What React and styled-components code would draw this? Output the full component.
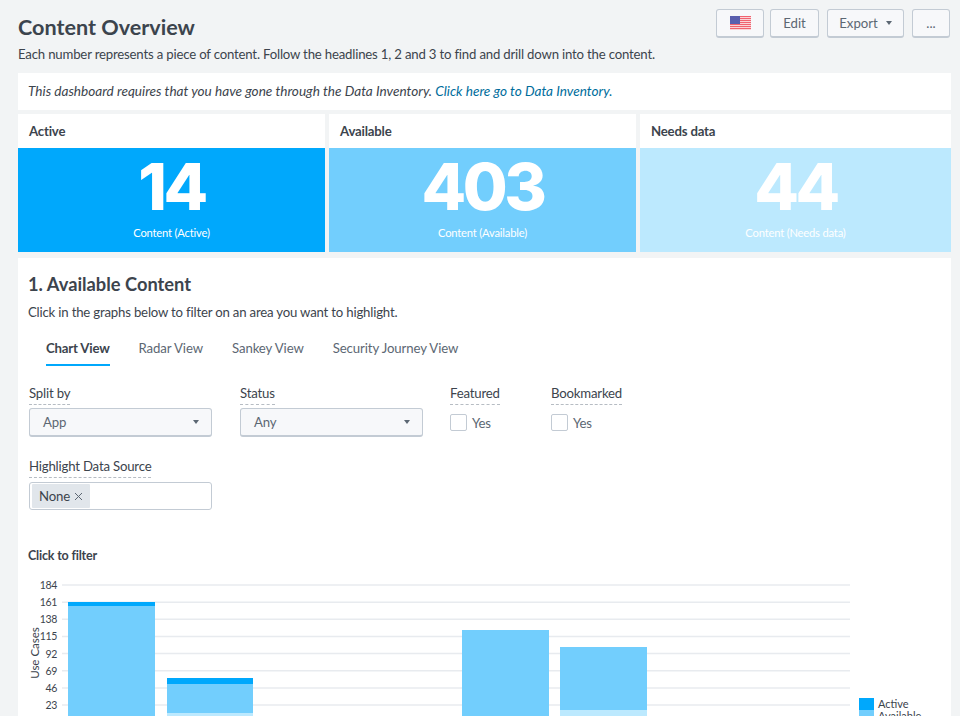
import React from 'react';
import styled, { createGlobalStyle } from 'styled-components';

const GlobalStyle = createGlobalStyle`
  html, body {
    margin: 0;
    height: 716px;
    overflow: hidden;
    background: #f2f4f5;
    font-family: Lato, "Open Sans", sans-serif;
    font-size: 13.2px;
    letter-spacing: -0.19px;
    color: #3c444d;
  }
`;

const ACTIVE = '#00a8fc';
const AVAILABLE = '#72cefd';
const NEEDS = '#bce9fe';

const Page = styled.div`
  width: 960px;
  height: 716px;
  overflow: hidden;
  box-sizing: border-box;
  padding: 9px 9px 0 18px;
`;

const TitleRow = styled.div`
  display: flex;
  justify-content: space-between;
  align-items: flex-start;
  height: 29px;
`;

const Title = styled.h1`
  margin: 4px 0 0;
  font-size: 21.6px;
  line-height: 28px;
  font-weight: 700;
  letter-spacing: 0;
`;

const Toolbar = styled.div`
  display: flex;
  margin-right: 1px;
`;

const ToolButton = styled.button`
  display: flex;
  align-items: center;
  justify-content: center;
  gap: 8px;
  box-sizing: border-box;
  width: ${({ $w }) => $w}px;
  height: 29px;
  margin-left: ${({ $ml }) => $ml || 0}px;
  padding: 0;
  border: 1px solid #c3cbd4;
  border-bottom-width: 2px;
  border-radius: 3px;
  background: #f7f8fa;
  color: #5c6773;
  font: 13.2px Lato, sans-serif;
`;

const Caret = styled.span`
  width: 0;
  height: 0;
  border-left: 3.5px solid transparent;
  border-right: 3.5px solid transparent;
  border-top: 4px solid #5c6773;
`;

const Intro = styled.p`
  margin: 8px 0 10px;
  line-height: 17px;
`;

const Notice = styled.div`
  box-sizing: border-box;
  height: 37px;
  padding: 9px 10px;
  background: #fff;
  font-size: 13.6px;
  line-height: 18px;
  letter-spacing: 0;
  font-style: italic;

  a {
    color: #006d9c;
    text-decoration: none;
  }
`;

const Cards = styled.div`
  display: grid;
  grid-template-columns: 307px 307px 311px;
  gap: 4px;
  margin-top: 4px;
`;

const Card = styled.div`
  background: #fff;
`;

const CardTitle = styled.div`
  height: 34px;
  padding-left: 11px;
  line-height: 34px;
  font-weight: 700;
`;

const CardBody = styled.div`
  height: 104px;
  box-sizing: border-box;
  padding-top: 7px;
  background: ${({ $bg }) => $bg};
  color: #fff;
  text-align: center;
`;

const BigNumber = styled.div`
  font-family: Inter, sans-serif;
  font-size: 65px;
  line-height: 64px;
  font-weight: 800;
  letter-spacing: -3.5px;
`;

const CardLabel = styled.div`
  margin-top: 7px;
  font-size: 11.2px;
  line-height: 14px;
`;

const Panel = styled.div`
  margin-top: 6px;
  height: 470px;
  padding: 0 10px;
  background: #fff;
`;

const Heading = styled.h2`
  margin: 0;
  padding-top: 14px;
  font-size: 18.3px;
  line-height: 24px;
  font-weight: 700;
  letter-spacing: 0;
`;

const Hint = styled.p`
  margin: 7px 0 0;
  line-height: 18px;
`;

const Tabs = styled.div`
  display: flex;
  gap: 29px;
  margin: 9px 0 0 18px;
`;

const Tab = styled.div`
  height: 36px;
  padding-top: 9px;
  box-sizing: border-box;
  line-height: 18px;
  letter-spacing: ${({ $active }) => ($active ? '-0.19px' : '-0.1px')};
  font-weight: ${({ $active }) => ($active ? 700 : 400)};
  color: ${({ $active }) => ($active ? '#3c444d' : '#5c6773')};
  border-bottom: 2px solid ${({ $active }) => ($active ? ACTIVE : 'transparent')};
`;

const Filters = styled.div`
  display: flex;
  margin: 19px 0 0 1px;
`;

const Field = styled.div`
  width: ${({ $w }) => $w}px;
`;

const FieldLabel = styled.span`
  display: inline-block;
  line-height: 17px;
  padding-bottom: 2px;
  border-bottom: 1px dashed #b6bcc3;
`;

const Select = styled.div`
  display: flex;
  align-items: center;
  justify-content: space-between;
  box-sizing: border-box;
  width: 183px;
  height: 29px;
  margin-top: 3px;
  padding: 0 12px 0 13px;
  border: 1px solid #c3cbd4;
  border-bottom-width: 2px;
  border-radius: 3px;
  background: #f7f8fa;
  color: #5c6773;
`;

const CheckRow = styled.div`
  display: flex;
  align-items: center;
  gap: 5px;
  margin-top: 9px;
  color: #5c6773;
`;

const Box = styled.span`
  box-sizing: border-box;
  width: 17px;
  height: 17px;
  border: 1px solid #c3cbd4;
  border-radius: 2px;
  background: #fff;
`;

const MultiWrap = styled.div`
  margin: 21px 0 0 1px;
`;

const Multi = styled.div`
  display: flex;
  align-items: center;
  box-sizing: border-box;
  width: 183px;
  height: 28px;
  margin-top: 4px;
  padding: 0 2px;
  border: 1px solid #c3cbd4;
  border-radius: 3px;
`;

const Chip = styled.span`
  display: flex;
  align-items: center;
  gap: 4px;
  height: 24px;
  padding: 0 7px;
  background: #e1e6eb;
  border-radius: 1px;
`;

const ChartTitle = styled.div`
  margin-top: 38px;
  font-size: 12.5px;
  line-height: 16px;
  font-weight: 700;
`;

const Chart = styled.svg`
  display: block;
  margin: 6px 0 0 -28px;
  overflow: visible;

  text {
    font-family: Lato, sans-serif;
    font-size: 11px;
    letter-spacing: 0;
    fill: #3c444d;
  }
`;

const TickLabel = styled.text`
  && {
    font-size: 10.5px;
    letter-spacing: -0.3px;
  }
`;

const AxisLabel = styled.text`
  && {
    font-size: 11.5px;
  }
`;

const ticks = [184, 161, 138, 115, 92, 69, 46, 23, 0];
const tickY = (i) => 585 + i * 17.15 - 570;

const bars = [
  { x: 68, w: 87, parts: [[602, 606, ACTIVE], [606, 730, AVAILABLE]] },
  { x: 167, w: 86, parts: [[678, 684, ACTIVE], [684, 713, AVAILABLE], [713, 730, NEEDS]] },
  { x: 462, w: 87, parts: [[630, 730, AVAILABLE]] },
  { x: 560, w: 87, parts: [[647, 710, AVAILABLE], [710, 730, NEEDS]] },
];

const UsFlag = () => (
  <svg width="21" height="14" viewBox="0 0 21 14">
    <rect width="21" height="14" fill="#fbe0e3" />
    {[0, 2, 4, 6, 8, 10, 12].map((y) => (
      <rect key={y} y={y} width="21" height="1.1" fill="#f0626f" />
    ))}
    <rect width="10" height="8" fill="#5a5fae" />
  </svg>
);

const CloseIcon = () => (
  <svg width="9" height="9" viewBox="0 0 9 9">
    <path d="M1 1l7 7M8 1l-7 7" stroke="#5c6773" strokeWidth="1" fill="none" />
  </svg>
);

const App = () => (
  <Page>
    <GlobalStyle />
    <TitleRow>
      <Title>Content Overview</Title>
      <Toolbar>
        <ToolButton $w={48}><UsFlag /></ToolButton>
        <ToolButton $w={49} $ml={6}>Edit</ToolButton>
        <ToolButton $w={77} $ml={8}>Export <Caret /></ToolButton>
        <ToolButton $w={38} $ml={8}>...</ToolButton>
      </Toolbar>
    </TitleRow>
    <Intro>Each number represents a piece of content. Follow the headlines 1, 2 and 3 to find and drill down into the content.</Intro>
    <Notice>
      This dashboard requires that you have gone through the Data Inventory. <a href="#inventory">Click here go to Data Inventory.</a>
    </Notice>
    <Cards>
      <Card>
        <CardTitle>Active</CardTitle>
        <CardBody $bg={ACTIVE}>
          <BigNumber>14</BigNumber>
          <CardLabel>Content (Active)</CardLabel>
        </CardBody>
      </Card>
      <Card>
        <CardTitle>Available</CardTitle>
        <CardBody $bg={AVAILABLE}>
          <BigNumber>403</BigNumber>
          <CardLabel>Content (Available)</CardLabel>
        </CardBody>
      </Card>
      <Card>
        <CardTitle>Needs data</CardTitle>
        <CardBody $bg={NEEDS}>
          <BigNumber>44</BigNumber>
          <CardLabel>Content (Needs data)</CardLabel>
        </CardBody>
      </Card>
    </Cards>
    <Panel>
      <Heading>1. Available Content</Heading>
      <Hint>Click in the graphs below to filter on an area you want to highlight.</Hint>
      <Tabs>
        <Tab $active>Chart View</Tab>
        <Tab>Radar View</Tab>
        <Tab>Sankey View</Tab>
        <Tab>Security Journey View</Tab>
      </Tabs>
      <Filters>
        <Field $w={211}>
          <FieldLabel>Split by</FieldLabel>
          <Select>App <Caret /></Select>
        </Field>
        <Field $w={210}>
          <FieldLabel>Status</FieldLabel>
          <Select>Any <Caret /></Select>
        </Field>
        <Field $w={101}>
          <FieldLabel>Featured</FieldLabel>
          <CheckRow><Box />Yes</CheckRow>
        </Field>
        <Field $w={100}>
          <FieldLabel>Bookmarked</FieldLabel>
          <CheckRow><Box />Yes</CheckRow>
        </Field>
      </Filters>
      <MultiWrap>
        <FieldLabel>Highlight Data Source</FieldLabel>
        <Multi>
          <Chip>None <CloseIcon /></Chip>
        </Multi>
      </MultiWrap>
      <ChartTitle>Click to filter</ChartTitle>
      <Chart width="940" height="160" viewBox="0 0 940 160">
        {ticks.map((t, i) => (
          <g key={t}>
            <line x1="62" x2="850" y1={tickY(i)} y2={tickY(i)} stroke="#e8ebef" strokeWidth="1.5" />
            <TickLabel x="57" y={tickY(i) + 4} textAnchor="end">{t}</TickLabel>
          </g>
        ))}
        <AxisLabel transform={`translate(39 ${653 - 570}) rotate(-90)`} textAnchor="middle">Use Cases</AxisLabel>
        {bars.map((b) =>
          b.parts.map(([top, bottom, fill]) => (
            <rect key={`${b.x}-${top}`} x={b.x} y={top - 570} width={b.w} height={bottom - top} fill={fill} />
          ))
        )}
        <rect x="859" y={698 - 570} width="15" height="12" fill={ACTIVE} />
        <rect x="859" y={710 - 570} width="15" height="12" fill={AVAILABLE} />
        <text x="878" y={708 - 570}>Active</text>
        <text x="878" y={720 - 570}>Available</text>
      </Chart>
    </Panel>
  </Page>
);

export default App;
